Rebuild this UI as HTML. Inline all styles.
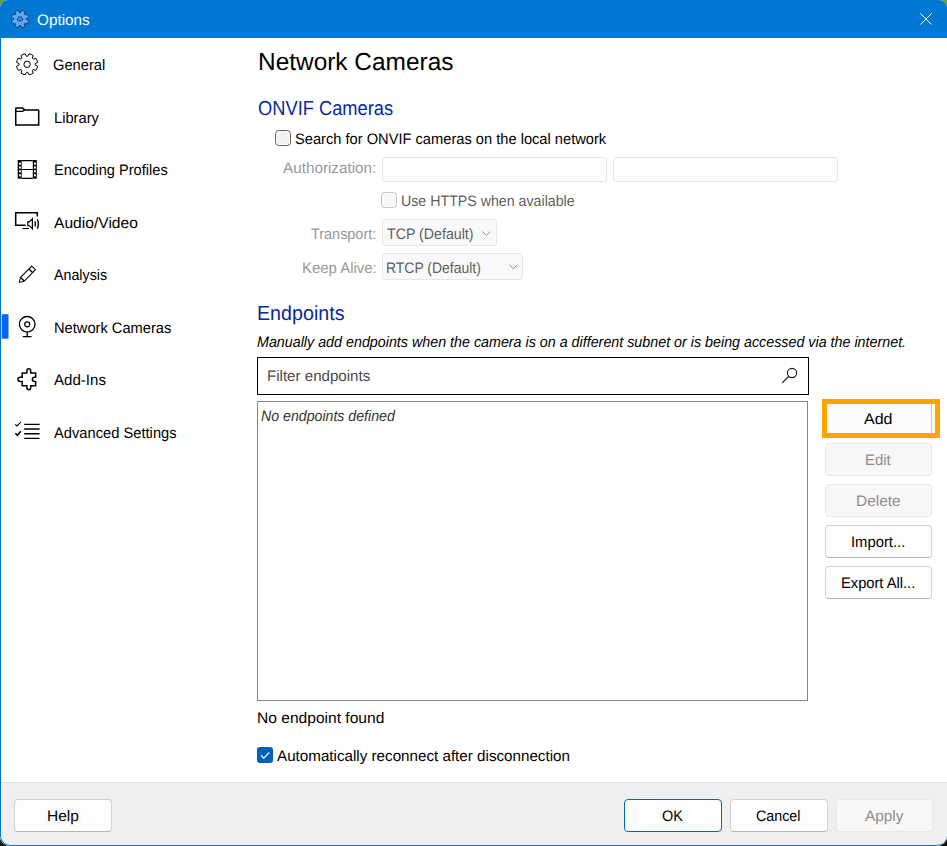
<!DOCTYPE html>
<html><head><meta charset="utf-8">
<style>
html,body{margin:0;padding:0;}
body{width:947px;height:846px;position:relative;overflow:hidden;background:#fff;font-family:"Liberation Sans",sans-serif;color:#000;}
.a{position:absolute;box-sizing:border-box;}
.t{position:absolute;white-space:nowrap;transform-origin:0 0;text-rendering:geometricPrecision;}
.btn{position:absolute;box-sizing:border-box;border:1px solid #d2d2d2;border-bottom-color:#b5b5b5;border-radius:4px;background:#fdfdfd;}
.dis{border-color:#e8e8e8;border-bottom-color:#e8e8e8;background:#f8f8f8;}
.cb{position:absolute;box-sizing:border-box;border-radius:3px;}
svg{position:absolute;left:0;top:0;overflow:visible;}
</style></head><body>
<div class="a" style="left:0;top:0;width:14px;height:14px;background:#6f9c3d"></div>
<div class="a" style="right:0;top:0;width:14px;height:14px;background:#6f9c3d"></div>
<div class="a" style="left:0;bottom:0;width:14px;height:14px;background:#161616"></div>
<div class="a" style="right:0;bottom:0;width:14px;height:14px;background:#161616"></div>
<div class="a" style="left:0;top:0;width:947px;height:846px;border-radius:8px 8px 10px 10px;overflow:hidden;background:#fff">
  <div class="a" style="left:0;top:0;width:947px;height:38px;background:#0078d4"></div>
  <div class="a" style="left:0;top:782px;width:947px;height:64px;background:#efefef;border-top:1px solid #e0e0e0"></div>
  <div class="a" style="left:1px;top:783px;width:1px;height:62px;background:#fdf8f2"></div>
  <div class="a" style="left:0;top:30px;width:947px;height:816px;border-left:1px solid #0072d4;border-bottom:1px solid #0072d4;border-radius:0 0 10px 10px"></div>
</div>
<!-- selection indicator -->


<!-- form controls -->
<div class="cb" style="left:275px;top:130px;width:16px;height:16px;border:1px solid #636363;background:#f2f2f2;box-shadow:inset 0 0 0 1px #fafafa;border-radius:3.5px"></div>
<div class="a" style="left:382px;top:157px;width:225px;height:25px;border:1px solid #e4e4e4;border-radius:3px;background:#fdfdfd"></div>
<div class="a" style="left:613px;top:157px;width:225px;height:25px;border:1px solid #e4e4e4;border-radius:3px;background:#fdfdfd"></div>
<div class="cb" style="left:381px;top:192px;width:16px;height:16px;border:1px solid #c6c6c6;background:#f8f8f8;box-shadow:inset 0 0 0 1px #fdfdfd;border-radius:3.5px"></div>
<div class="a" style="left:382px;top:219px;width:115px;height:27px;border:1px solid #e6e6e6;border-radius:3px;background:#f9f9f9"></div>
<div class="a" style="left:382px;top:253px;width:141px;height:27px;border:1px solid #e6e6e6;border-radius:3px;background:#f9f9f9"></div>
<div class="a" style="left:257px;top:357px;width:552px;height:38px;border:1px solid #000;background:#fff"></div>
<div class="a" style="left:257px;top:401px;width:551px;height:300px;border:1px solid #7e8590;background:#fff"></div>

<!-- buttons -->
<div class="a" style="left:822px;top:399px;width:118px;height:39px;border:5px solid #ffa500;background:#fff"></div>
<div class="a" style="left:827px;top:404px;width:105px;height:29px;background:#fbfbfb;border-right:1px solid #c9cad2"></div>
<div class="btn dis" style="left:825px;top:443px;width:107px;height:33px"></div>
<div class="btn dis" style="left:825px;top:484px;width:107px;height:33px"></div>
<div class="btn" style="left:825px;top:525px;width:107px;height:33px"></div>
<div class="btn" style="left:825px;top:566px;width:107px;height:33px"></div>

<div class="cb" style="left:257px;top:747px;width:16px;height:16px;background:#005fb8"></div>

<div class="btn" style="left:14px;top:799px;width:98px;height:33px"></div>
<div class="btn" style="left:624px;top:799px;width:98px;height:33px;border:1px solid #0067c0;background:#fdfdfd"></div>
<div class="btn" style="left:730px;top:799px;width:98px;height:33px"></div>
<div class="btn dis" style="left:836px;top:799px;width:97px;height:33px"></div>

<svg width="947" height="846" viewBox="0 0 947 846" fill="none" stroke="#000">
  <rect x="1.7" y="314.2" width="6.8" height="24.5" fill="#0b63f6" stroke="none"/>
  <!-- title gear -->
  <path d="M20.51 12.52L21.59 10.45A8.7 8.7 0 0 1 24.93 11.83L24.22 14.06A6.5 6.5 0 0 1 24.94 14.78L27.17 14.07A8.7 8.7 0 0 1 28.55 17.41L26.48 18.49A6.5 6.5 0 0 1 26.48 19.51L28.55 20.59A8.7 8.7 0 0 1 27.17 23.93L24.94 23.22A6.5 6.5 0 0 1 24.22 23.94L24.93 26.17A8.7 8.7 0 0 1 21.59 27.55L20.51 25.48A6.5 6.5 0 0 1 19.49 25.48L18.41 27.55A8.7 8.7 0 0 1 15.07 26.17L15.78 23.94A6.5 6.5 0 0 1 15.06 23.22L12.83 23.93A8.7 8.7 0 0 1 11.45 20.59L13.52 19.51A6.5 6.5 0 0 1 13.52 18.49L11.45 17.41A8.7 8.7 0 0 1 12.83 14.07L15.06 14.78A6.5 6.5 0 0 1 15.78 14.06L15.07 11.83A8.7 8.7 0 0 1 18.41 10.45L19.49 12.52A6.5 6.5 0 0 1 20.51 12.52Z" fill="#5aa8f6" stroke="#0c1a2a" stroke-width="1" stroke-dasharray="1.6 0.9"/>
  <circle cx="20" cy="19" r="2.4" fill="#2f8ce6" stroke="#0c1a2a" stroke-width="1" stroke-dasharray="1.6 0.9"/>
  <!-- close -->
  <path d="M920.5 13.5L931.5 24.5M931.5 13.5L920.5 24.5" stroke="#fff" stroke-width="1"/>
  <!-- General gear -->
  <path d="M27.73 56.32L29.05 53.78A10.7 10.7 0 0 1 33.16 55.48L32.30 58.22A8.0 8.0 0 0 1 33.18 59.10L35.92 58.24A10.7 10.7 0 0 1 37.62 62.35L35.08 63.67A8.0 8.0 0 0 1 35.08 64.93L37.62 66.25A10.7 10.7 0 0 1 35.92 70.36L33.18 69.50A8.0 8.0 0 0 1 32.30 70.38L33.16 73.12A10.7 10.7 0 0 1 29.05 74.82L27.73 72.28A8.0 8.0 0 0 1 26.47 72.28L25.15 74.82A10.7 10.7 0 0 1 21.04 73.12L21.90 70.38A8.0 8.0 0 0 1 21.02 69.50L18.28 70.36A10.7 10.7 0 0 1 16.58 66.25L19.12 64.93A8.0 8.0 0 0 1 19.12 63.67L16.58 62.35A10.7 10.7 0 0 1 18.28 58.24L21.02 59.10A8.0 8.0 0 0 1 21.90 58.22L21.04 55.48A10.7 10.7 0 0 1 25.15 53.78L26.47 56.32A8.0 8.0 0 0 1 27.73 56.32Z" stroke-width="1" stroke-linejoin="round"/>
  <circle cx="27.1" cy="64.3" r="3.2" stroke-width="1"/>
  <!-- Library folder -->
  <path d="M15.75 124.9V108.6Q15.75 107.9 16.5 107.9H22.6L24.6 109.9H38Q38.7 109.9 38.7 110.6V124.9Z" stroke-width="1.5"/>
  <path d="M15.75 111.3H22.6L24.6 109.9" stroke-width="1.3"/>
  <!-- Encoding film -->
  <rect x="17.7" y="160" width="4" height="18.6" fill="#000" stroke="none"/>
  <rect x="32.8" y="160" width="4" height="18.6" fill="#000" stroke="none"/>
  <g fill="#fff" stroke="none">
    <rect x="19.1" y="162.6" width="1.8" height="2.2"/><rect x="19.1" y="166.4" width="1.8" height="2.2"/>
    <rect x="19.1" y="170.2" width="1.8" height="2.2"/><rect x="19.1" y="174.2" width="1.8" height="2.2"/>
    <rect x="34" y="162.6" width="1.8" height="2.2"/><rect x="34" y="166.4" width="1.8" height="2.2"/>
    <rect x="34" y="170.2" width="1.8" height="2.2"/><rect x="34" y="174.2" width="1.8" height="2.2"/>
  </g>
  <path d="M21.7 160.6H32.8M21.7 178.4H32.8M21.7 169.5H32.8" stroke-width="1.1"/>
  <!-- Audio/Video -->
  <path d="M25.6 225.2H15.7V212.7H37.3V216.4" stroke-width="1.5"/>
  <path d="M22.7 228.5H28.9" stroke-width="1.1"/>
  <path d="M27.8 221.9H29.3L32.4 218.8V228.8L29.3 225.6H27.8Z" stroke-width="1.2"/>
  <path d="M34.9 221.3Q35.9 223.7 34.9 226.4M37.3 219.2Q39.4 224 37.3 228.6" stroke-width="1.4"/>
  <!-- Analysis pencil -->
  <g transform="translate(19.3 282.4) rotate(-45.5)">
    <path d="M0 0L4.2 -2.6H20.4V2.6H4.2Z" stroke-width="1"/>
    <path d="M4.4 -2.6V2.6M16.3 -2.6V2.6" stroke-width="1.4"/>
  </g>
  <!-- Network cameras webcam -->
  <circle cx="27.2" cy="324.3" r="7.8" stroke-width="1.3"/>
  <circle cx="27.2" cy="324.3" r="2.5" stroke-width="1.2"/>
  <path d="M27.2 332.2V336.4M22.8 336.6H31.6" stroke-width="1.3"/>
  <!-- Add-Ins puzzle -->
  <path d="M22.2 372.9H26.9V370.7A1.9 1.9 0 0 1 30.7 370.7V372.9H35.65V377.2H34.5A2.15 2.15 0 0 0 34.5 381.5H35.65V385.7H30.7V387.8A1.9 1.9 0 0 1 26.9 387.8V385.7H22.2V381.5H20.1A2.15 2.15 0 0 1 20.1 377.2H22.2Z" stroke-width="1.5"/>
  <!-- Advanced settings -->
  <path d="M15.2 424.3L17 426L20.8 422.1" stroke-width="1.1"/>
  <path d="M15.3 433.3L17.4 435.3L20.8 431.2" stroke-width="1.5"/>
  <path d="M24.2 424.4H39.6M24.2 429H39.6M24.2 433.7H39.6M24.2 438.4H39.6" stroke-width="1.4"/>
  <!-- combo chevrons -->
  <path d="M482.5 231.5L486.4 235.4L490.3 231.5" stroke="#8e8e8e" stroke-width="1"/>
  <path d="M509.4 264.8L513.3 268.7L517.2 264.8" stroke="#8e8e8e" stroke-width="1"/>
  <!-- magnifier -->
  <circle cx="792" cy="373" r="4.6" stroke="#111" stroke-width="1.1"/>
  <path d="M788.6 376.5L782.2 382.8" stroke="#111" stroke-width="1.1"/>
  <!-- checked mark -->
  <path d="M261 755.3L263.8 758.1L269.3 752.5" stroke="#fff" stroke-width="1.2"/>
</svg>
<div class="t" style="left:36.6px;top:12.5px;font-size:15.2px;line-height:15.2px;color:#fff;transform:scaleX(1.008)">Options</div>
<div class="t" style="left:53.0px;top:57.5px;font-size:15.2px;line-height:15.2px;color:#000;transform:scaleX(0.967)">General</div>
<div class="t" style="left:53.6px;top:110.5px;font-size:15.2px;line-height:15.2px;color:#000;transform:scaleX(0.967)">Library</div>
<div class="t" style="left:53.6px;top:162.5px;font-size:15.2px;line-height:15.2px;color:#000;transform:scaleX(0.962)">Encoding Profiles</div>
<div class="t" style="left:53.7px;top:215.5px;font-size:15.2px;line-height:15.2px;color:#000;transform:scaleX(1.028)">Audio/Video</div>
<div class="t" style="left:53.8px;top:267.5px;font-size:15.2px;line-height:15.2px;color:#000;transform:scaleX(0.938)">Analysis</div>
<div class="t" style="left:53.6px;top:320.5px;font-size:15.2px;line-height:15.2px;color:#000;transform:scaleX(0.965)">Network Cameras</div>
<div class="t" style="left:53.8px;top:372.5px;font-size:15.2px;line-height:15.2px;color:#000;transform:scaleX(0.992)">Add-Ins</div>
<div class="t" style="left:53.9px;top:425.5px;font-size:15.2px;line-height:15.2px;color:#000;transform:scaleX(0.968)">Advanced Settings</div>
<div class="t" style="left:257.6px;top:50.6px;font-size:24.6px;line-height:24.6px;color:#000;transform:scaleX(0.993)">Network Cameras</div>
<div class="t" style="left:257.5px;top:99.2px;font-size:20.3px;line-height:20.3px;color:#062a9c;transform:scaleX(0.902)">ONVIF Cameras</div>
<div class="t" style="left:294.7px;top:131.5px;font-size:15.2px;line-height:15.2px;color:#000;transform:scaleX(0.965)">Search for ONVIF cameras on the local network</div>
<div class="t" style="left:283.0px;top:160.5px;font-size:15.2px;line-height:15.2px;color:#999999;transform:scaleX(1.005)">Authorization:</div>
<div class="t" style="left:401.1px;top:193.5px;font-size:15.2px;line-height:15.2px;color:#5f5f5f;transform:scaleX(0.935)">Use HTTPS when available</div>
<div class="t" style="left:310.9px;top:226.5px;font-size:15.2px;line-height:15.2px;color:#999999;transform:scaleX(0.950)">Transport:</div>
<div class="t" style="left:386.8px;top:226.5px;font-size:15.2px;line-height:15.2px;color:#5f5f5f;transform:scaleX(0.935)">TCP (Default)</div>
<div class="t" style="left:301.7px;top:260.5px;font-size:15.2px;line-height:15.2px;color:#999999;transform:scaleX(0.984)">Keep Alive:</div>
<div class="t" style="left:386.1px;top:260.5px;font-size:15.2px;line-height:15.2px;color:#5f5f5f;transform:scaleX(0.919)">RTCP (Default)</div>
<div class="t" style="left:256.9px;top:304.2px;font-size:20.3px;line-height:20.3px;color:#062a9c;transform:scaleX(0.970)">Endpoints</div>
<div class="t" style="left:257.2px;top:334.5px;font-size:15.2px;line-height:15.2px;color:#000;font-style:italic;transform:scaleX(0.941)">Manually add endpoints when the camera is on a different subnet or is being accessed via the internet.</div>
<div class="t" style="left:267.0px;top:368.5px;font-size:15.2px;line-height:15.2px;color:#4a4a4a;transform:scaleX(0.994)">Filter endpoints</div>
<div class="t" style="left:261.2px;top:408.5px;font-size:15.2px;line-height:15.2px;color:#333;font-style:italic;transform:scaleX(0.932)">No endpoints defined</div>
<div class="t" style="left:864.0px;top:411.5px;font-size:15.2px;line-height:15.2px;color:#000;transform:scaleX(1.054)">Add</div>
<div class="t" style="left:865.2px;top:452.5px;font-size:15.2px;line-height:15.2px;color:#8f8f8f;transform:scaleX(0.984)">Edit</div>
<div class="t" style="left:855.8px;top:493.5px;font-size:15.2px;line-height:15.2px;color:#8f8f8f;transform:scaleX(1.017)">Delete</div>
<div class="t" style="left:850.9px;top:534.5px;font-size:15.2px;line-height:15.2px;color:#000;transform:scaleX(0.974)">Import...</div>
<div class="t" style="left:841.0px;top:575.5px;font-size:15.2px;line-height:15.2px;color:#000;transform:scaleX(0.967)">Export All...</div>
<div class="t" style="left:257.0px;top:710.5px;font-size:15.2px;line-height:15.2px;color:#000;transform:scaleX(1.026)">No endpoint found</div>
<div class="t" style="left:277.0px;top:748.5px;font-size:15.2px;line-height:15.2px;color:#000">Automatically reconnect after disconnection</div>
<div class="t" style="left:46.7px;top:808.5px;font-size:15.2px;line-height:15.2px;color:#000;transform:scaleX(1.020)">Help</div>
<div class="t" style="left:662.2px;top:808.5px;font-size:15.2px;line-height:15.2px;color:#000;transform:scaleX(0.952)">OK</div>
<div class="t" style="left:756.4px;top:808.5px;font-size:15.2px;line-height:15.2px;color:#000;transform:scaleX(0.939)">Cancel</div>
<div class="t" style="left:865.3px;top:808.5px;font-size:15.2px;line-height:15.2px;color:#8f8f8f;transform:scaleX(1.013)">Apply</div>
</body></html>
